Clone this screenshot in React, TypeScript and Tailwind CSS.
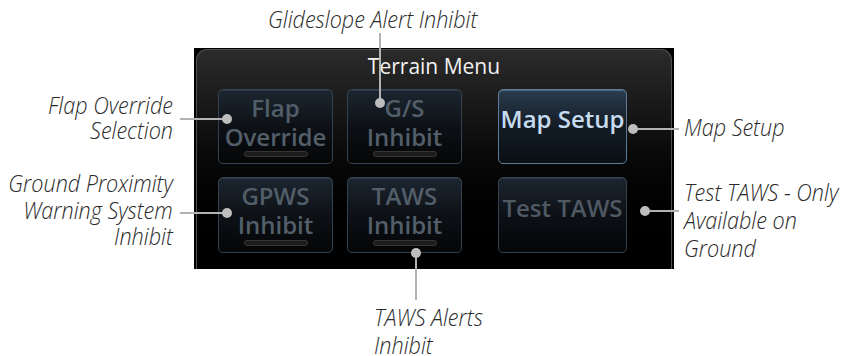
import React from "react";

const label =
  "block shrink-0 italic font-light text-[24px] text-[#2a2a2a] font-['Open_Sans',sans-serif] whitespace-nowrap scale-x-[0.9]";

const offBtn =
  "flex flex-col items-center rounded-[5px] border border-[#34424f] bg-gradient-to-b from-[#1c2630] via-[#0d1116] to-[#050607] shadow-[inset_0_1px_0_#2c3946]";

const IndicatorBar = () => (
  <div className="mt-auto mb-[6px] h-[6px] w-[64px] rounded-full border border-[#363636] bg-[#1c1c1c]" />
);

const TwoLineButton = ({ top, bottom }: { top: string; bottom: string }) => (
  <div className={offBtn}>
    <div className="pt-[3px] text-center text-[24px] leading-[29px] font-semibold text-[#525e69]">
      <div>{top}</div>
      <div>{bottom}</div>
    </div>
    <IndicatorBar />
  </div>
);

const Dot = ({ x, y }: { x: number; y: number }) => (
  <div
    className="absolute h-[10px] w-[10px] rounded-full bg-[#bdbdbd]"
    style={{ left: x - 5, top: y - 5 }}
  />
);

const TerrainMenu = () => (
  <div className="h-[221px] w-[480px] shrink-0 bg-black px-[2px] pt-[1px] font-['Open_Sans',sans-serif]">
    <div className="h-full rounded-t-[11px] border border-b-0 border-[#4f4f4f] bg-gradient-to-b from-[#2b2b2b] via-[#0b0b0b] via-45% to-black pl-[21px] pt-[4px]">
      <div className="pr-[21px] text-center text-[21px] leading-[24px] text-[#f2f2f2]">
        Terrain Menu
      </div>
      <div className="mt-[11px] grid grid-cols-[115px_115px_151px] grid-rows-[75px_76px] gap-x-[14px] gap-y-[13px]">
        <TwoLineButton top="Flap" bottom="Override" />
        <TwoLineButton top="G/S" bottom="Inhibit" />
        <div className="ml-[22px] flex items-center justify-center rounded-[5px] border-[1.5px] border-[#5d7b97] bg-gradient-to-b from-[#2c3d4e] via-[#131c25] to-[#0a0f14] pb-4 text-[24px] leading-[29px] font-semibold text-[#c6dbef] shadow-[inset_0_1px_0_#4a6682]">
          Map Setup
        </div>
        <TwoLineButton top="GPWS" bottom="Inhibit" />
        <TwoLineButton top="TAWS" bottom="Inhibit" />
        <div className={`${offBtn} ml-[22px] justify-center pb-4 text-[24px] leading-[29px] font-semibold text-[#4e5964]`}>
          Test TAWS
        </div>
      </div>
    </div>
  </div>
);

export default function App() {
  return (
    <div className="relative h-[356px] w-[855px] overflow-hidden bg-white">
      <div className="h-[48px] pl-[268px] pt-[6px]">
        <span className={`${label} origin-left leading-[26px]`}>Glideslope Alert Inhibit</span>
      </div>

      <div className="flex h-[221px]">
        <div className="flex w-[194px] shrink-0 flex-col items-end gap-[28px] pr-[21px] pt-[44px]">
          <div className={`${label} origin-right text-right leading-[25px]`}>
            Flap Override
            <br />
            Selection
          </div>
          <div className={`${label} origin-right text-right leading-[26.5px]`}>
            Ground Proximity
            <br />
            Warning System
            <br />
            Inhibit
          </div>
        </div>

        <TerrainMenu />

        <div className="flex shrink-0 flex-col gap-[38px] pl-[10px] pt-[66px]">
          <div className={`${label} origin-left leading-[26px]`}>Map Setup</div>
          <div className={`${label} origin-left leading-[28px]`}>
            Test TAWS - Only
            <br />
            Available on
            <br />
            Ground
          </div>
        </div>
      </div>

      <div className="pl-[374px] pt-[34px]">
        <div className={`${label} origin-left leading-[28px]`}>
          TAWS Alerts
          <br />
          Inhibit
        </div>
      </div>

      {/* leader lines drawn over the panel */}
      <div className="absolute left-[379px] top-[33px] h-[70px] w-[2px] bg-[#b3b3b3]" />
      <div className="absolute left-[180px] top-[118px] h-[2px] w-[47px] bg-[#b3b3b3]" />
      <div className="absolute left-[180px] top-[212px] h-[2px] w-[47px] bg-[#b3b3b3]" />
      <div className="absolute left-[415px] top-[253px] h-[47px] w-[2px] bg-[#b3b3b3]" />
      <div className="absolute left-[633px] top-[128px] h-[2px] w-[46px] bg-[#b3b3b3]" />
      <div className="absolute left-[645px] top-[210px] h-[2px] w-[34px] bg-[#b3b3b3]" />
      <Dot x={380} y={103} />
      <Dot x={227} y={119} />
      <Dot x={227} y={213} />
      <Dot x={416} y={253} />
      <Dot x={633} y={129} />
      <Dot x={645} y={211} />
    </div>
  );
}
